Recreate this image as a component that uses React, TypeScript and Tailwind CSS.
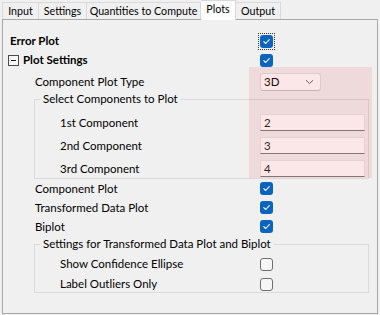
import React from "react";

function Checked({ focus = false }: { focus?: boolean }) {
  const box = (
    <span className="flex h-[13px] w-[13px] items-center justify-center rounded-[3px] bg-[#0b64c0]">
      <svg width="9" height="9" viewBox="0 0 9 9">
        <path d="M1.8 4.7 L3.7 6.5 L7.3 2.6" fill="none" stroke="#ffffff" strokeWidth="1.1" strokeLinecap="round" strokeLinejoin="round" />
      </svg>
    </span>
  );
  if (focus) {
    return <span className="-m-[2px] flex border border-dotted border-[#333] p-[1px]">{box}</span>;
  }
  return box;
}

function Unchecked() {
  return <span className="block h-[13px] w-[13px] rounded-[3px] border border-[#6e6e6e] bg-[#f6f6f6]" />;
}

function TextBox({ value }: { value: string }) {
  return (
    <div className="flex h-[17px] w-[105px] items-center border border-[#e6e6e6] border-b-[#7a7a7a] bg-white pl-[3px] text-[#1a1a1a]">
      {value}
    </div>
  );
}

export default function App() {
  return (
    <div className="h-[315px] w-[380px] overflow-hidden whitespace-nowrap bg-[#f0f0f0] text-[11.5px] text-black [font-family:Lato,'Segoe_UI',sans-serif]">
      {/* tabs */}
      <div className="flex h-[19px] items-end pl-[2px] text-[10.7px]">
        <div className="flex h-[17px] w-[37px] items-center justify-center border-l border-t border-r border-[#d9d9d9]">Input</div>
        <div className="flex h-[17px] w-[48px] items-center justify-center border-t border-r border-[#d9d9d9]">Settings</div>
        <div className="flex h-[17px] w-[114px] items-center justify-center border-t border-r border-[#d9d9d9]">Quantities to Compute</div>
        <div className="relative z-10 -mb-[1px] flex h-[20px] w-[35px] items-center justify-center border-t border-r border-[#d9d9d9] bg-white pb-[2px]">Plots</div>
        <div className="flex h-[17px] w-[45px] items-center justify-center border-t border-r border-[#d9d9d9]">Output</div>
      </div>

      {/* panel */}
      <div className="relative mx-[2px] h-[295px] border border-[#a8a8a8] pt-[12px]">
        {/* Error Plot */}
        <div className="flex h-[18px] items-center pl-[7px]">
          <div className="w-[250px] font-bold">Error Plot</div>
          <Checked focus />
        </div>
        {/* Plot Settings */}
        <div className="mt-[1px] flex h-[18px] items-center pl-[5px]">
          <div className="flex w-[252px] items-center">
            <span className="flex h-[11px] w-[11px] items-center justify-center border border-[#4a4a4a] bg-[#f7f7f7]">
              <span className="block h-[1px] w-[5px] bg-[#222]" />
            </span>
            <span className="ml-[4px] font-bold">Plot Settings</span>
          </div>
          <Checked />
        </div>
        {/* Component Plot Type */}
        <div className="mt-[4px] flex h-[18px] items-center pl-[32px]">
          <div className="w-[225px]">Component Plot Type</div>
          <div className="flex h-[18px] w-[61px] items-center justify-between rounded-[3px] border border-[#dedede] border-b-[#c4c4c4] bg-white pl-[3px] pr-[6px]">
            <span>3D</span>
            <svg width="9" height="6" viewBox="0 0 9 6">
              <path d="M1 1.2 L4.5 4.6 L8 1.2" fill="none" stroke="#606060" strokeWidth="1" />
            </svg>
          </div>
        </div>
        {/* Select Components group */}
        <fieldset className="ml-[31px] mr-[8px] border border-[#dadada] pb-[1px]">
          <legend className="ml-[5px] h-[16px] px-[3px] leading-[16px]">Select Components to Plot</legend>
          <div className="mt-[7px] flex h-[17px] items-center pl-[25px]">
            <div className="w-[200px]">1st Component</div>
            <TextBox value="2" />
          </div>
          <div className="mt-[6px] flex h-[17px] items-center pl-[25px]">
            <div className="w-[200px]">2nd Component</div>
            <TextBox value="3" />
          </div>
          <div className="mt-[6px] flex h-[17px] items-center pl-[25px]">
            <div className="w-[200px]">3rd Component</div>
            <TextBox value="4" />
          </div>
        </fieldset>
        {/* checkbox rows */}
        <div className="flex h-[19px] items-center pl-[32px]">
          <div className="w-[225px]">Component Plot</div>
          <Checked />
        </div>
        <div className="flex h-[19px] items-center pl-[32px]">
          <div className="w-[225px]">Transformed Data Plot</div>
          <Checked />
        </div>
        <div className="flex h-[19px] items-center pl-[32px]">
          <div className="w-[225px]">Biplot</div>
          <Checked />
        </div>
        {/* Settings group */}
        <fieldset className="ml-[31px] mr-[8px] border border-[#dadada]">
          <legend className="ml-[5px] h-[16px] px-[3px] leading-[16px]">Settings for Transformed Data Plot and Biplot</legend>
          <div className="mt-[4px] flex h-[16px] items-center pl-[25px]">
            <div className="w-[200px]">Show Confidence Ellipse</div>
            <Unchecked />
          </div>
          <div className="mt-[4px] flex h-[16px] items-center pl-[25px]">
            <div className="w-[200px]">Label Outliers Only</div>
            <Unchecked />
          </div>
        </fieldset>

        {/* highlight overlay */}
        <div className="pointer-events-none absolute left-[246px] top-[47px] h-[111px] w-[123px] bg-[rgba(222,70,70,0.13)]" />
      </div>
    </div>
  );
}
